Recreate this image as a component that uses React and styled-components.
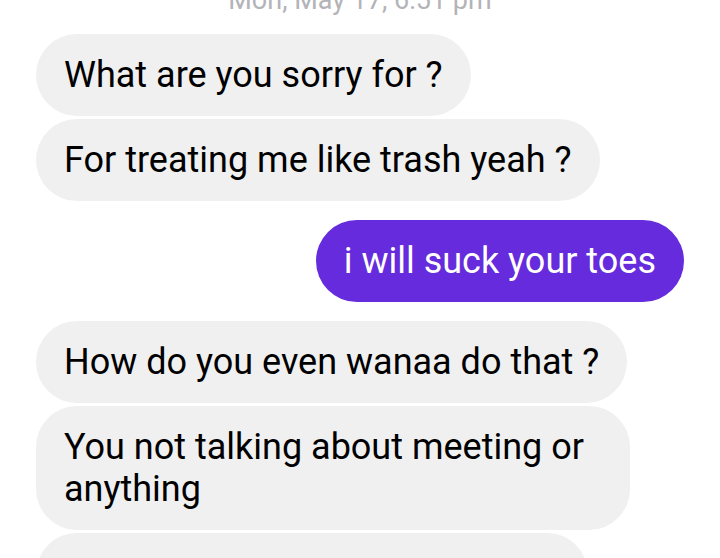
import styled, { createGlobalStyle } from "styled-components";

const GlobalStyle = createGlobalStyle`
  html, body {
    margin: 0;
    padding: 0;
    background: #ffffff;
    overflow: hidden;
  }
  body {
    font-family: Roboto, "Noto Sans", sans-serif;
    -webkit-font-smoothing: antialiased;
  }
`;

const Thread = styled.div`
  width: 720px;
  height: 558px;
  box-sizing: border-box;
  padding: 0 36px;
  overflow: hidden;
  display: flex;
  flex-direction: column;
`;

const Timestamp = styled.div`
  margin-top: -15px;
  margin-bottom: 19px;
  text-align: center;
  font-size: 27px;
  line-height: 30px;
  color: #b3b3b8;
`;

const Group = styled.div`
  display: flex;
  flex-direction: column;
  align-items: ${(p) => (p.$mine ? "flex-end" : "flex-start")};
  gap: 3px;
  margin-bottom: 19px;
`;

const Bubble = styled.div`
  box-sizing: border-box;
  max-width: 594px;
  padding: 20px 28px;
  border-radius: 41px;
  font-size: 36px;
  line-height: 42px;
  color: ${(p) => (p.$mine ? "#ffffff" : "#000000")};
  background: ${(p) => (p.$mine ? "#652bdc" : "#f0f0f0")};
  word-wrap: break-word;
`;

const Spacer = styled.span`
  display: inline-block;
  width: 496px;
`;

const conversation = [
  {
    mine: false,
    messages: ["What are you sorry for ?", "For treating me like trash yeah ?"],
  },
  { mine: true, messages: ["i will suck your toes"] },
  {
    mine: false,
    messages: [
      "How do you even wanaa do that ?",
      "You not talking about meeting or anything",
      null,
    ],
  },
];

export default function App() {
  return (
    <>
      <GlobalStyle />
      <Thread>
        <Timestamp>Mon, May 17, 6:51 pm</Timestamp>
        {conversation.map((g, i) => (
          <Group key={i} $mine={g.mine}>
            {g.messages.map((m, j) => (
              <Bubble key={j} $mine={g.mine}>
                {m === null ? <Spacer>&nbsp;</Spacer> : m}
              </Bubble>
            ))}
          </Group>
        ))}
      </Thread>
    </>
  );
}
